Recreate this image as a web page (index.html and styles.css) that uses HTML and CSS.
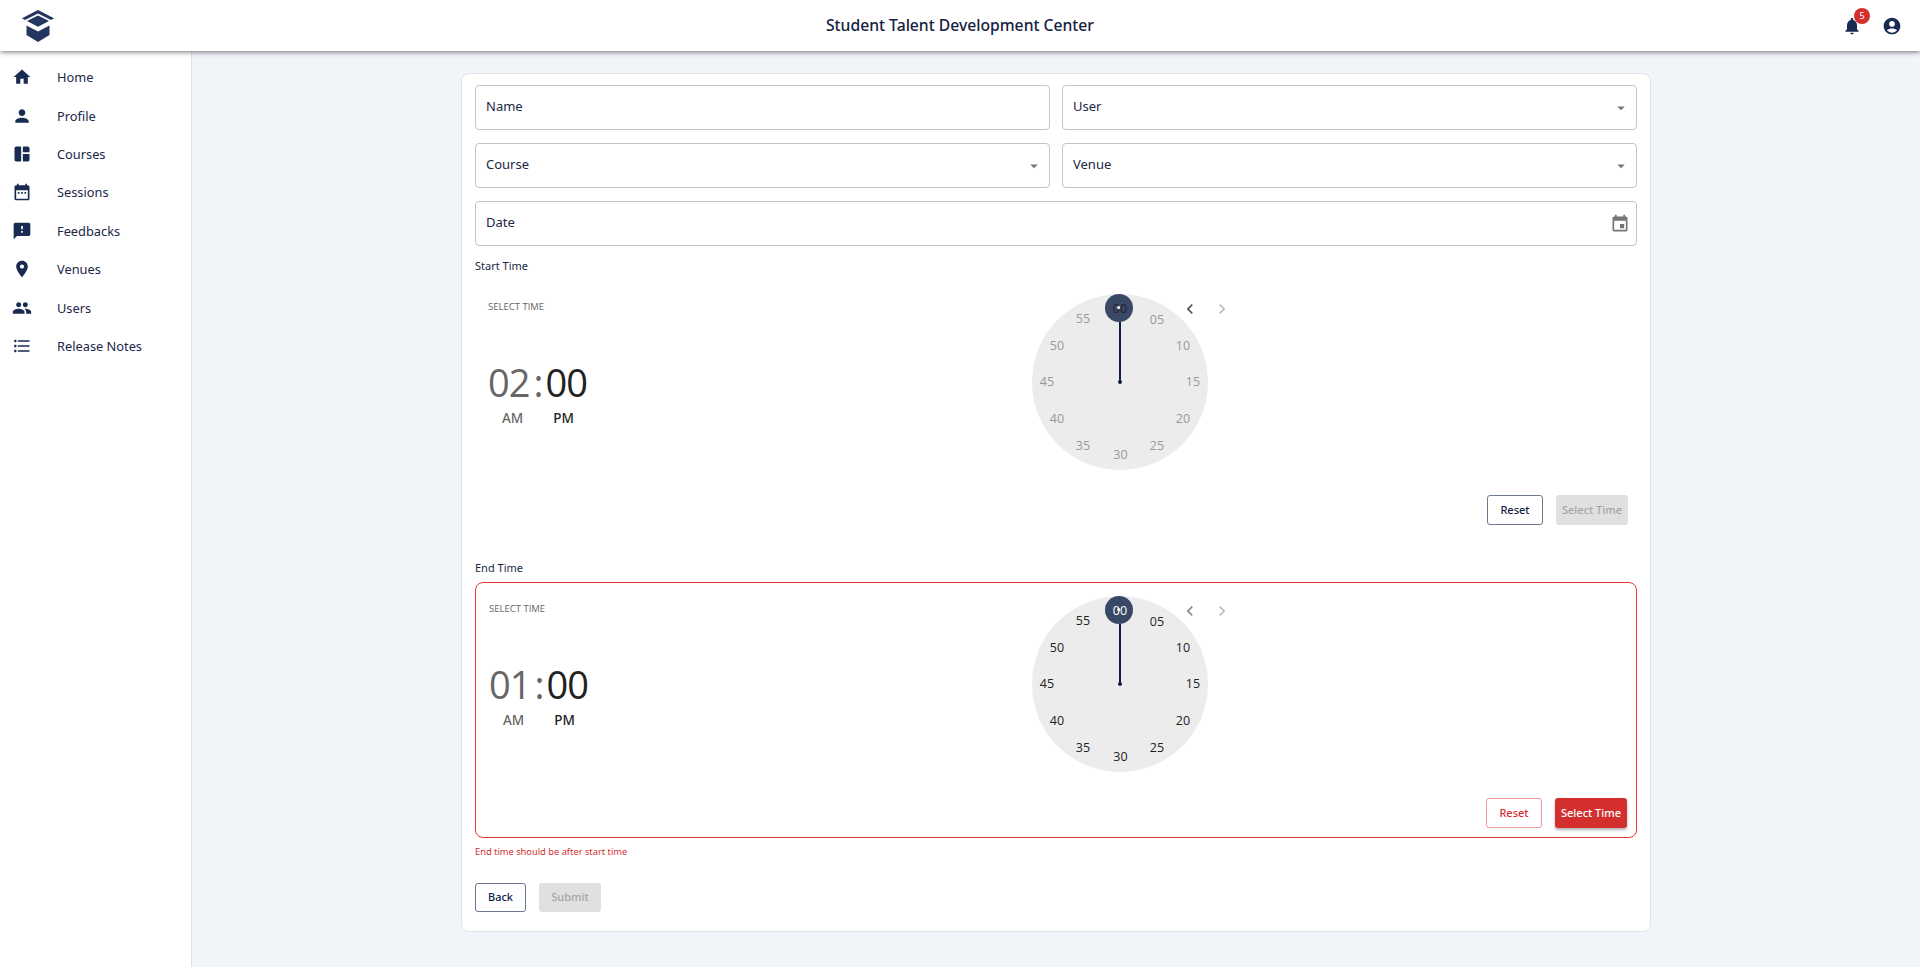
FILE: index.html
```html
<!DOCTYPE html>
<html lang="en">
<head>
    <meta charset="UTF-8">
    <meta name="viewport" content="width=device-width, initial-scale=1.0">
    <title>Student Talent Development Center</title>
    <link rel="stylesheet" href="styles.css">
</head>
<body>
    <header class="topbar">
        <svg class="logo" viewBox="0 0 32 32">
            <path d="M0 8.2 16 0l16 8.2-3 1.7L16 3.4 3 9.900z"/>
            <path d="M5 11 16 5.500 27 11 16 16.800z"/>
            <path d="M4.500 15.500 16 21.500l11.500-6V25L16 32 4.500 25z"/>
        </svg>
        <h1 class="title">Student Talent Development Center</h1>
        <div class="topbar-actions">
            <span class="bell">
                <svg class="icon" viewBox="0 0 24 24"><path d="M12 22c1.100 0 2-.9 2-2h-4c0 1.100.89 2 2 2zm6-6v-5c0-3.070-1.640-5.640-4.500-6.320V4c0-.83-.67-1.500-1.500-1.500s-1.500.67-1.500 1.500v.68C7.630 5.360 6 7.920 6 11v5l-2 2v1h16v-1l-2-2z"/></svg>
                <span class="badge">5</span>
            </span>
            <svg class="icon" viewBox="0 0 24 24"><path d="M12 2C6.480 2 2 6.480 2 12s4.480 10 10 10 10-4.480 10-10S17.520 2 12 2zm0 4c1.930 0 3.500 1.570 3.500 3.500S13.930 13 12 13s-3.500-1.570-3.500-3.500S10.070 6 12 6zm0 14c-2.030 0-4.430-.82-6.140-2.880C7.550 15.800 9.680 15 12 15s4.450.8 6.140 2.120C16.430 19.180 14.030 20 12 20z"/></svg>
        </div>
    </header>

    <div class="layout">
        <nav class="sidebar">
            <a class="nav-item"><svg class="icon" viewBox="0 0 24 24"><path d="M10 20v-6h4v6h5v-8h3L12 3 2 12h3v8z"/></svg>Home</a>
            <a class="nav-item"><svg class="icon" viewBox="0 0 24 24"><path d="M12 12c2.210 0 4-1.790 4-4s-1.790-4-4-4-4 1.790-4 4 1.790 4 4 4zm0 2c-2.670 0-8 1.340-8 4v2h16v-2c0-2.660-5.330-4-8-4z"/></svg>Profile</a>
            <a class="nav-item"><svg class="icon" viewBox="0 0 24 24"><path d="M10 21H5c-1.100 0-2-.9-2-2V5c0-1.100.9-2 2-2h5c.55 0 1 .45 1 1v16c0 .55-.45 1-1 1zm4 0h5c1.100 0 2-.9 2-2v-7h-8v8c0 .55.45 1 1 1zm7-11V5c0-1.100-.9-2-2-2h-5c-.55 0-1 .45-1 1v6h8z"/></svg>Courses</a>
            <a class="nav-item"><svg class="icon" viewBox="0 0 24 24"><path d="M19 4h-1V2h-2v2H8V2H6v2H5c-1.110 0-1.990.9-1.990 2L3 20a2 2 0 0 0 2 2h14c1.100 0 2-.9 2-2V6c0-1.100-.9-2-2-2zm0 16H5V10h14v10zM9 14H7v-2h2v2zm4 0h-2v-2h2v2zm4 0h-2v-2h2v2z"/></svg>Sessions</a>
            <a class="nav-item"><svg class="icon" viewBox="0 0 24 24"><path d="M20 2H4c-1.100 0-1.990.9-1.990 2L2 22l4-4h14c1.100 0 2-.9 2-2V4c0-1.100-.9-2-2-2zm-7 12h-2v-2h2v2zm0-4h-2V6h2v4z"/></svg>Feedbacks</a>
            <a class="nav-item"><svg class="icon" viewBox="0 0 24 24"><path d="M12 2C8.130 2 5 5.130 5 9c0 5.250 7 13 7 13s7-7.750 7-13c0-3.870-3.130-7-7-7zm0 9.500c-1.380 0-2.500-1.120-2.500-2.500s1.120-2.500 2.500-2.500 2.500 1.120 2.500 2.500-1.120 2.500-2.500 2.500z"/></svg>Venues</a>
            <a class="nav-item"><svg class="icon" viewBox="0 0 24 24"><path d="M16 11c1.660 0 2.990-1.340 2.990-3S17.660 5 16 5c-1.660 0-3 1.340-3 3s1.340 3 3 3zm-8 0c1.660 0 2.990-1.340 2.990-3S9.660 5 8 5C6.340 5 5 6.340 5 8s1.340 3 3 3zm0 2c-2.330 0-7 1.170-7 3.500V19h14v-2.500c0-2.330-4.670-3.500-7-3.500zm8 0c-.29 0-.62.02-.97.05 1.160.84 1.970 1.970 1.970 3.450V19h6v-2.500c0-2.330-4.670-3.500-7-3.500z"/></svg>Users</a>
            <a class="nav-item"><svg class="icon" viewBox="0 0 24 24"><path d="M4 10.500c-.83 0-1.500.67-1.500 1.500s.67 1.500 1.500 1.500 1.500-.67 1.500-1.500-.67-1.500-1.500-1.500zm0-6c-.83 0-1.500.67-1.500 1.500S3.170 7.500 4 7.500 5.500 6.830 5.500 6 4.830 4.500 4 4.500zm0 12c-.83 0-1.500.68-1.500 1.500s.68 1.500 1.500 1.500 1.500-.68 1.500-1.500-.67-1.500-1.500-1.500zM7 19h14v-2H7v2zm0-6h14v-2H7v2zm0-8v2h14V5H7z"/></svg>Release Notes</a>
        </nav>

        <main class="content">
            <form class="card">
                <div class="fields">
                    <div class="field">Name</div>
                    <div class="field">User<svg class="caret" viewBox="0 0 24 24"><path d="M7 10l5 5 5-5z"/></svg></div>
                    <div class="field">Course<svg class="caret" viewBox="0 0 24 24"><path d="M7 10l5 5 5-5z"/></svg></div>
                    <div class="field">Venue<svg class="caret" viewBox="0 0 24 24"><path d="M7 10l5 5 5-5z"/></svg></div>
                    <div class="field wide">Date<svg class="date-icon" viewBox="0 0 24 24"><path d="M17 12h-5v5h5v-5zM16 1v2H8V1H6v2H5c-1.110 0-1.990.9-1.990 2L3 19c0 1.100.89 2 2 2h14c1.100 0 2-.9 2-2V5c0-1.100-.9-2-2-2h-1V1h-2zm3 18H5V8h14v11z"/></svg></div>
                </div>

                <div class="time-label">Start Time</div>
                <div class="picker disabled">
                    <div class="picker-left">
                        <div class="picker-caption">SELECT TIME</div>
                        <div class="picker-time"><span class="hour">02</span><span class="colon">:</span><span>00</span></div>
                        <div class="picker-ampm"><span class="am">AM</span><span class="pm">PM</span></div>
                    </div>
                    <div class="clock">
                        <svg class="clock-face" viewBox="0 0 176 176">
                            <circle class="face" cx="88" cy="88" r="88"/>
                            <line class="hand" x1="88" y1="88" x2="88" y2="28"/>
                            <circle class="hand-dot" cx="88" cy="88" r="2"/>
                            <circle class="thumb" cx="87" cy="14" r="14"/>
                            <g class="nums">
                                <text class="sel" x="88" y="19">00</text>
                                <text x="125" y="29.500">05</text>
                                <text x="151" y="56">10</text>
                                <text x="161" y="92">15</text>
                                <text x="151" y="129">20</text>
                                <text x="125" y="156">25</text>
                                <text x="88.500" y="165">30</text>
                                <text x="51" y="156">35</text>
                                <text x="25" y="129">40</text>
                                <text x="15" y="92">45</text>
                                <text x="25" y="56">50</text>
                                <text x="51" y="29">55</text>
                            </g>
                            <circle class="thumb-dot" cx="86.700" cy="13.500" r="1.500"/>
                        </svg>
                        <div class="clock-nav">
                            <svg class="chev prev" viewBox="0 0 24 24"><path d="M15.410 7.410 14 6l-6 6 6 6 1.410-1.410L10.830 12z"/></svg>
                            <svg class="chev next" viewBox="0 0 24 24"><path d="M10 6 8.590 7.410 13.170 12l-4.580 4.590L10 18l6-6z"/></svg>
                        </div>
                    </div>
                    <div class="picker-actions">
                        <button type="button" class="btn outline">Reset</button>
                        <button type="button" class="btn solid off">Select Time</button>
                    </div>
                </div>

                <div class="time-label end-label">End Time</div>
                <div class="picker invalid">
                    <div class="picker-left">
                        <div class="picker-caption">SELECT TIME</div>
                        <div class="picker-time"><span class="hour">01</span><span class="colon">:</span><span>00</span></div>
                        <div class="picker-ampm"><span class="am">AM</span><span class="pm">PM</span></div>
                    </div>
                    <div class="clock">
                        <svg class="clock-face" viewBox="0 0 176 176">
                            <circle class="face" cx="88" cy="88" r="88"/>
                            <line class="hand" x1="88" y1="88" x2="88" y2="28"/>
                            <circle class="hand-dot" cx="88" cy="88" r="2"/>
                            <circle class="thumb" cx="87" cy="14" r="14"/>
                            <g class="nums">
                                <text class="sel" x="88" y="19">00</text>
                                <text x="125" y="29.500">05</text>
                                <text x="151" y="56">10</text>
                                <text x="161" y="92">15</text>
                                <text x="151" y="129">20</text>
                                <text x="125" y="156">25</text>
                                <text x="88.500" y="165">30</text>
                                <text x="51" y="156">35</text>
                                <text x="25" y="129">40</text>
                                <text x="15" y="92">45</text>
                                <text x="25" y="56">50</text>
                                <text x="51" y="29">55</text>
                            </g>
                            <circle class="thumb-dot" cx="86.700" cy="13.500" r="1.500"/>
                        </svg>
                        <div class="clock-nav">
                            <svg class="chev prev" viewBox="0 0 24 24"><path d="M15.410 7.410 14 6l-6 6 6 6 1.410-1.410L10.830 12z"/></svg>
                            <svg class="chev next" viewBox="0 0 24 24"><path d="M10 6 8.590 7.410 13.170 12l-4.580 4.590L10 18l6-6z"/></svg>
                        </div>
                    </div>
                    <div class="picker-actions">
                        <button type="button" class="btn outline red">Reset</button>
                        <button type="button" class="btn solid red">Select Time</button>
                    </div>
                </div>
                <div class="error-text">End time should be after start time</div>

                <div class="form-actions">
                    <button type="button" class="btn outline back">Back</button>
                    <button type="button" class="btn solid off submit">Submit</button>
                </div>
            </form>
        </main>
    </div>
</body>
</html>
```

FILE: styles.css
```css
* { box-sizing: border-box; }
html, body { height: 100%; }
body {
    margin: 0;
    font-family: "Noto Sans", Roboto, sans-serif;
    color: #1a2747;
    background: #f1f4f9;
    overflow: hidden;
}
.icon { width: 20px; height: 20px; fill: #1a2b52; display: block; }

.topbar {
    height: 51px;
    padding-bottom: 2px;
    background: #fff;
    display: flex;
    align-items: center;
    justify-content: center;
    position: relative;
    z-index: 2;
    box-shadow: 0 1px 5px rgba(0, 0, 0, 0.55);
}
.logo { position: absolute; left: 22px; top: 10px; width: 32px; height: 32px; fill: #24365f; }
.title { margin: 0; font-size: 15.700px; font-weight: 500; color: #14213f; }
.topbar-actions {
    position: absolute;
    right: 18px;
    top: 16px;
    display: flex;
    gap: 20px;
}
.bell { position: relative; display: block; }
.badge {
    position: absolute;
    left: 12px;
    top: -8px;
    width: 16px;
    height: 16px;
    border-radius: 50%;
    background: #d32f2f;
    color: #fff;
    font-size: 9px;
    line-height: 16px;
    text-align: center;
}

.layout { display: flex; height: calc(100% - 51px); }
.sidebar {
    width: 192px;
    flex: none;
    background: #fff;
    border-right: 1px solid #dde1e7;
    padding-top: 7px;
}
.nav-item {
    display: flex;
    align-items: center;
    height: 38.4px;
    padding-left: 12px;
    gap: 25px;
    font-size: 12.800px;
    color: #1a2747;
}

.content { flex: 1; padding-top: 22px; }
.card {
    width: 1190px;
    height: 859px;
    margin: 0 auto;
    background: #fff;
    border: 1px solid #dfe3e9;
    border-radius: 8px;
    padding: 11px 13px;
}
.fields {
    display: grid;
    grid-template-columns: 1fr 1fr;
    gap: 13px 12px;
}
.field {
    height: 45px;
    border: 1px solid #c4c4c4;
    border-radius: 4px;
    display: flex;
    align-items: center;
    justify-content: space-between;
    padding: 0 6px 3px 10px;
    font-size: 13px;
    color: #1a2747;
}
.field.wide { grid-column: 1 / 3; }
.caret { width: 18px; height: 18px; fill: #757575; margin-top: 3px; }
.date-icon { width: 20px; height: 20px; fill: #757575; margin-top: 3px; }

.time-label {
    margin-top: 13px;
    margin-bottom: 7px;
    font-size: 11px;
    line-height: 14px;
    color: #1a2747;
}
.end-label { margin-top: 27px; margin-bottom: 7px; }

.picker {
    height: 254px;
    display: grid;
    grid-template-columns: 544px 176px 1fr;
    padding: 14px 9px 9px 13px;
    position: relative;
}
.picker.invalid {
    height: 256px;
    grid-template-columns: 543px 176px 1fr;
    padding-top: 13px;
    border: 1px solid #e53935;
    border-radius: 8px;
}
.picker-caption {
    font-family: "Open Sans", sans-serif;
    font-size: 9.500px;
    line-height: 14px;
    margin-top: 6px;
    color: #666;
}
.picker-time {
    font-family: "Open Sans", sans-serif;
    font-size: 38px;
    letter-spacing: -1px;
    line-height: 54px;
    margin-top: 41px;
    color: #222;
    white-space: nowrap;
}
.hour, .colon { color: #666; }
.colon { padding: 0 3px 0 4px; }
.picker-ampm {
    display: flex;
    gap: 30px;
    margin: 0 0 0 14px;
    font-size: 13.500px;
    font-weight: 500;
}
.am { color: #666; }
.pm { color: #222; }

.clock { position: relative; width: 176px; height: 176px; }
.clock-face { display: block; width: 176px; height: 176px; overflow: visible; }
.face { fill: #ececec; }
.hand { stroke: #0f1f47; stroke-width: 2; }
.hand-dot { fill: #0f1f47; }
.thumb { fill: #3a4868; }
.thumb-dot { fill: #fff; }
.nums text {
    font-family: "Open Sans", sans-serif;
    font-size: 12.500px;
    text-anchor: middle;
    fill: #222;
}
.nums .sel { fill: #fff; }
.disabled .nums text { fill: #999; }
.disabled .nums .sel { fill: #222; }

.clock-nav {
    position: absolute;
    left: 176px;
    top: 5px;
    display: flex;
    gap: 12px;
    margin-left: -28px;
}
.chev { width: 20px; height: 20px; display: block; }
.prev { fill: #555; }
.next { fill: #bbb; }
.invalid .prev { fill: #888; }

.picker-actions {
    display: flex;
    gap: 13px;
    align-self: end;
    justify-content: flex-end;
    grid-column: 3;
}
.btn {
    height: 30px;
    padding: 0 0 2px;
    border-radius: 3px;
    font-family: inherit;
    font-size: 11px;
    font-weight: 500;
}
.outline { width: 56px; background: #fff; border: 1px solid #6d7891; color: #0f1f47; }
.solid { width: 72px; border: none; }
.off { background: #e0e0e0; color: #a6a6a6; }
.outline.red { border-color: #ee9a9a; color: #d32f2f; }
.solid.red { background: #d32f2f; color: #fff; box-shadow: 0 2px 3px rgba(0, 0, 0, 0.3); }

.error-text {
    margin-top: 7px;
    font-size: 9.300px;
    line-height: 14px;
    color: #d32f2f;
}
.form-actions { display: flex; gap: 13px; margin-top: 24px; }
.back { width: 51px; height: 29px; }
.submit { width: 62px; height: 29px; }
```
